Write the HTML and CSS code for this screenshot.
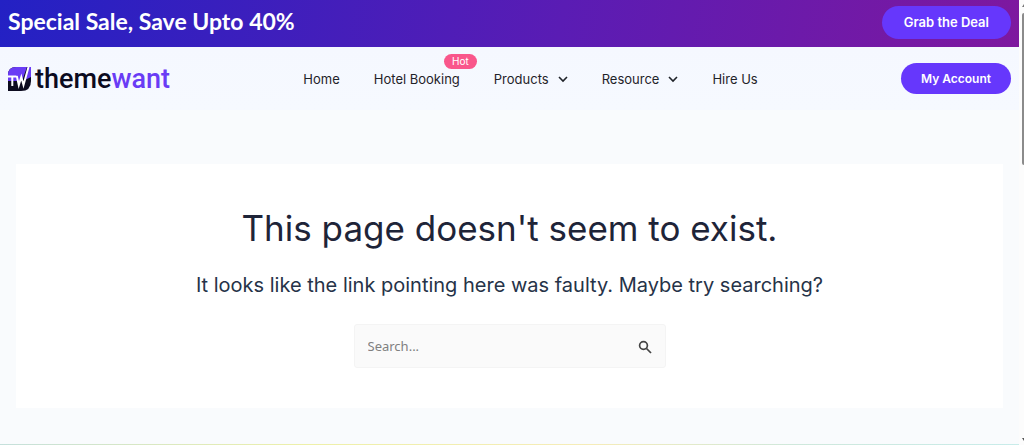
FILE: index.html
```html
<!DOCTYPE html>
<html lang="en">
    <head>
        <meta charset="UTF-8">
        <meta name="viewport" content="width=device-width, initial-scale=1.0">
        <title>Page not found - themewant</title>
        <link rel="stylesheet" href="styles.css">
    </head>
    <body>
        <div class="site">
            <div class="sale-bar">
                <p class="sale-text">Special Sale, Save Upto 40%</p>
                <a class="btn btn-deal" href="#">Grab the Deal</a>
            </div>

            <header class="header">
                <a class="logo" href="#">
                    <svg class="logo-mark" viewBox="0 0 23 24" aria-hidden="true">
                        <path d="M8 0H23V14Q23 24 13 24H0V8Q0 0 8 0Z" fill="#0c0b1f"/>
                        <path d="M8 0H19L14 14H0V8Q0 0 8 0Z" fill="#6a3cf5"/>
                        <path d="M20 0H23V10L17 13Z" fill="#6a3cf5"/>
                        <path d="M0 9.500H8.500M4.300 9.500V19M8.800 9L10.800 18L13.300 10L15.500 18L20.500 0" fill="none" stroke="#fff" stroke-width="2"/>
                    </svg>
                    <span class="logo-text">theme<span class="logo-accent">want</span></span>
                </a>
                <nav class="nav">
                    <a class="nav-link" href="#">Home</a>
                    <a class="nav-link" href="#">Hotel Booking<span class="hot">Hot</span></a>
                    <a class="nav-link" href="#">Products
                        <svg class="chevron" viewBox="0 0 10 10" aria-hidden="true"><path d="M1 3L5 7L9 3"/></svg>
                    </a>
                    <a class="nav-link" href="#">Resource
                        <svg class="chevron" viewBox="0 0 10 10" aria-hidden="true"><path d="M1 3L5 7L9 3"/></svg>
                    </a>
                    <a class="nav-link" href="#">Hire Us</a>
                </nav>
                <a class="btn btn-account" href="#">My Account</a>
            </header>

            <main class="content">
                <section class="not-found">
                    <h1 class="title">This page doesn't seem to exist.</h1>
                    <p class="subtitle">It looks like the link pointing here was faulty. Maybe try searching?</p>
                    <form class="search" role="search">
                        <input class="search-field" type="search" placeholder="Search..." aria-label="Search">
                        <button class="search-submit" type="submit" aria-label="Search">
                            <svg class="search-icon" viewBox="0 0 14 14" aria-hidden="true">
                                <circle cx="5.500" cy="5.500" r="3.900"/>
                                <path d="M8.500 8.500L13 13"/>
                            </svg>
                        </button>
                    </form>
                </section>
            </main>
            <div class="footer-line"></div>
        </div>

        <!-- scrollbar -->
        <div class="scroll" aria-hidden="true">
            <span class="scroll-up"></span>
            <span class="scroll-thumb"></span>
            <span class="scroll-down"></span>
        </div>
    </body>
</html>
```
FILE: styles.css
```css
* {
    margin: 0;
    padding: 0;
    box-sizing: border-box;
}

body {
    display: flex;
    min-height: 100vh;
    background-color: #f9fbfd;
    font-family: Inter, "Liberation Sans", sans-serif;
}

a {
    color: inherit;
    text-decoration: none;
}

.site {
    flex: 1;
    display: flex;
    flex-direction: column;
}

/* top bar */
.sale-bar {
    display: flex;
    align-items: flex-start;
    justify-content: space-between;
    padding: 6px 8px 8px;
    background-image: linear-gradient(100deg, #2321c4 0%, #5a1cb4 55%, #7e189f 100%);
    color: #fff;
}

.sale-text {
    font-family: Lato, sans-serif;
    font-size: 23px;
    font-weight: 700;
    line-height: 30px;
}

.btn {
    border-radius: 17px;
    background-color: #6637fc;
    color: #fff;
    font-weight: 600;
    text-align: center;
    white-space: nowrap;
}

.btn-deal {
    padding: 0 22px;
    font-size: 13px;
    line-height: 33px;
}

.btn-account {
    padding: 0 20px;
    font-size: 12px;
    line-height: 31px;
}

/* header */
.header {
    display: flex;
    align-items: center;
    justify-content: space-between;
    padding: 16px 8px;
    background-image: linear-gradient(#f5f8ff, #f6f9ff);
}

.logo {
    display: flex;
    align-items: center;
    gap: 4px;
}

.logo-mark {
    width: 23px;
    height: 24px;
}

.logo-text {
    padding-top: 2px;
    color: #0c0b1f;
    font-family: Roboto, sans-serif;
    font-size: 27px;
    font-weight: 500;
    line-height: 29px;
}

.logo-accent {
    color: #6a3cf5;
}

.nav {
    display: flex;
    gap: 34px;
    padding-right: 10px;
    color: #1f2329;
    font-size: 13px;
    line-height: 20px;
}

.nav-link {
    position: relative;
    display: flex;
    align-items: center;
    gap: 9px;
}

.hot {
    position: absolute;
    top: -15px;
    right: -17px;
    padding: 0 8px;
    border-radius: 8px;
    background-color: #f9568b;
    color: #fff;
    font-size: 10px;
    line-height: 15px;
}

.chevron {
    width: 10px;
    height: 10px;
    fill: none;
    stroke: #1f2329;
    stroke-width: 1.600;
}

/* 404 */
.content {
    flex: 1;
    padding: 54px 16px 36px;
}

.not-found {
    display: flex;
    flex-direction: column;
    align-items: center;
    padding: 40px 16px;
    background-color: #fff;
    text-align: center;
}

.title {
    color: #1e2438;
    font-size: 35px;
    font-weight: 400;
    line-height: 48px;
}

.subtitle {
    margin: 17px 0 23px;
    color: #263348;
    font-size: 20px;
    line-height: 32px;
}

.search {
    display: flex;
    width: 312px;
    max-width: 100%;
    border: 1px solid #f4f4f4;
    border-radius: 3px;
    background-color: #fafafa;
}

.search-field {
    flex: 1;
    min-width: 0;
    height: 42px;
    padding: 0 13px;
    border: 0;
    background: none;
    font-family: "Noto Sans", sans-serif;
    font-size: 13px;
}

.search-field::placeholder {
    color: #808080;
}

.search-submit {
    width: 40px;
    border: 0;
    background: none;
}

.search-icon {
    width: 14px;
    height: 14px;
    vertical-align: middle;
    fill: none;
    stroke: #444;
    stroke-width: 1.700;
}

.footer-line {
    height: 1px;
    background-image: linear-gradient(90deg, #c5e0dc, #eef0a8 30%, #f6ecb8 58%, #cfe8dc 78%, #c8ecea);
}

/* scrollbar */
.scroll {
    display: flex;
    flex-direction: column;
    align-items: flex-end;
    width: 5px;
    padding: 4px 0;
    background-color: #fcfcfc;
}

.scroll-thumb {
    width: 2px;
    height: 152px;
    margin-top: 6px;
    border-radius: 2px 0 0 2px;
    background-color: #8b8b8b;
}

.scroll-up,
.scroll-down {
    border-left: 2px solid transparent;
}

.scroll-up {
    border-bottom: 3px solid #777;
}

.scroll-down {
    margin-top: auto;
    border-top: 3px solid #555;
}
```
